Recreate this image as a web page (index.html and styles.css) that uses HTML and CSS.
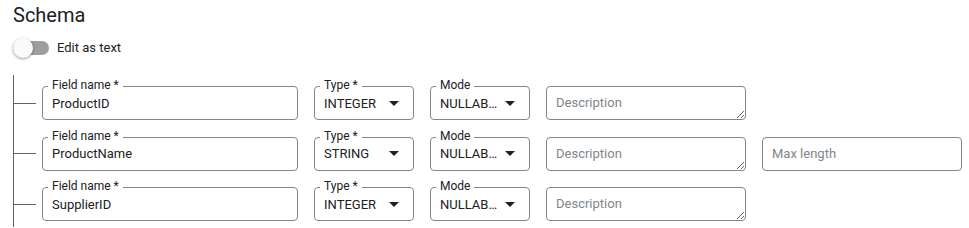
FILE: index.html
```html
<!DOCTYPE html>
<html>
<head>
<meta charset="utf-8">
<link rel="stylesheet" href="styles.css">
</head>
<body>
<div class="page">
  <h2 class="title">Schema</h2>
  <div class="toggle-row">
    <span class="switch"><span class="track"></span><span class="knob"></span></span>
    <span class="toggle-label">Edit as text</span>
  </div>
  <div class="tree">
    <div class="row">
      <span class="branch"></span>
      <div class="outlined name"><span class="float">Field name *</span><span class="value">ProductID</span></div>
      <div class="outlined select"><span class="float">Type *</span><span class="value">INTEGER</span><svg class="arrow" width="10" height="5" viewBox="0 0 10 5"><polygon points="0,0 10,0 5,5"/></svg></div>
      <div class="outlined select"><span class="float">Mode</span><span class="value">NULLAB…</span><svg class="arrow" width="10" height="5" viewBox="0 0 10 5"><polygon points="0,0 10,0 5,5"/></svg></div>
      <textarea class="desc" placeholder="Description"></textarea>
    </div>
    <div class="row">
      <span class="branch"></span>
      <div class="outlined name"><span class="float">Field name *</span><span class="value">ProductName</span></div>
      <div class="outlined select"><span class="float">Type *</span><span class="value">STRING</span><svg class="arrow" width="10" height="5" viewBox="0 0 10 5"><polygon points="0,0 10,0 5,5"/></svg></div>
      <div class="outlined select"><span class="float">Mode</span><span class="value">NULLAB…</span><svg class="arrow" width="10" height="5" viewBox="0 0 10 5"><polygon points="0,0 10,0 5,5"/></svg></div>
      <textarea class="desc" placeholder="Description"></textarea>
      <input class="maxlen" type="text" placeholder="Max length">
    </div>
    <div class="row">
      <span class="branch"></span>
      <div class="outlined name"><span class="float">Field name *</span><span class="value">SupplierID</span></div>
      <div class="outlined select"><span class="float">Type *</span><span class="value">INTEGER</span><svg class="arrow" width="10" height="5" viewBox="0 0 10 5"><polygon points="0,0 10,0 5,5"/></svg></div>
      <div class="outlined select"><span class="float">Mode</span><span class="value">NULLAB…</span><svg class="arrow" width="10" height="5" viewBox="0 0 10 5"><polygon points="0,0 10,0 5,5"/></svg></div>
      <textarea class="desc" placeholder="Description"></textarea>
    </div>
  </div>
</div>
</body>
</html>
```
FILE: styles.css
```css
html, body {
  margin: 0;
  padding: 0;
  background: #ffffff;
  font-family: Roboto, "Liberation Sans", Arial, sans-serif;
  color: #202124;
  overflow: hidden;
}
.page {
  padding-left: 13px;
}
.title {
  margin: 3px 0 0;
  font-size: 20px;
  line-height: 24px;
  font-weight: 400;
  color: #202124;
}
.toggle-row {
  display: flex;
  align-items: center;
  gap: 8px;
  height: 20px;
  margin-top: 11px;
}
.switch {
  position: relative;
  width: 36px;
  height: 20px;
  flex: none;
}
.track {
  position: absolute;
  left: 0;
  top: 3px;
  width: 36px;
  height: 14px;
  border-radius: 7px;
  background: #9e9e9e;
}
.knob {
  position: absolute;
  left: 0;
  top: 0;
  width: 20px;
  height: 20px;
  border-radius: 50%;
  background: #fafafa;
  box-shadow: 0 1px 3px rgba(0, 0, 0, 0.4);
}
.toggle-label {
  font-size: 13px;
  line-height: 20px;
  color: #202124;
}
.tree {
  margin-top: 17px;
  border-left: 1px solid #5f6368;
  padding-top: 11px;
  padding-bottom: 6px;
  display: flex;
  flex-direction: column;
  gap: 16.5px;
}
.row {
  display: flex;
  align-items: center;
  gap: 16px;
}
.branch {
  width: 22px;
  height: 1px;
  background: #5f6368;
  margin-right: -10px;
  flex: none;
}
.outlined {
  position: relative;
  box-sizing: border-box;
  height: 34px;
  border: 1px solid #80868b;
  border-radius: 4px;
  padding: 0 9px;
  display: flex;
  align-items: center;
  font-size: 13px;
  color: #202124;
  flex: none;
}
.name {
  width: 256px;
}
.select {
  width: 100px;
}
.float {
  position: absolute;
  top: -9px;
  left: 5px;
  padding: 0 4px;
  background: #ffffff;
  font-size: 12px;
  line-height: 14px;
  color: #202124;
  white-space: nowrap;
}
.value {
  white-space: nowrap;
}
.arrow {
  margin-left: auto;
  margin-right: 5px;
  flex: none;
  fill: #202124;
}
.desc {
  box-sizing: border-box;
  width: 200px;
  height: 34px;
  margin: 0;
  padding: 8px 9px;
  border: 1px solid #80868b;
  border-radius: 4px;
  font-family: Roboto, "Liberation Sans", Arial, sans-serif;
  font-size: 13px;
  line-height: 16px;
  color: #202124;
  background: #ffffff;
  outline: none;
  flex: none;
}
.maxlen {
  box-sizing: border-box;
  width: 200px;
  height: 34px;
  margin: 0;
  padding: 0 9px;
  border: 1px solid #80868b;
  border-radius: 4px;
  font-family: Roboto, "Liberation Sans", Arial, sans-serif;
  font-size: 13px;
  color: #202124;
  background: #ffffff;
  outline: none;
  flex: none;
}
.desc::placeholder,
.maxlen::placeholder {
  color: #80868b;
  opacity: 1;
}
```
